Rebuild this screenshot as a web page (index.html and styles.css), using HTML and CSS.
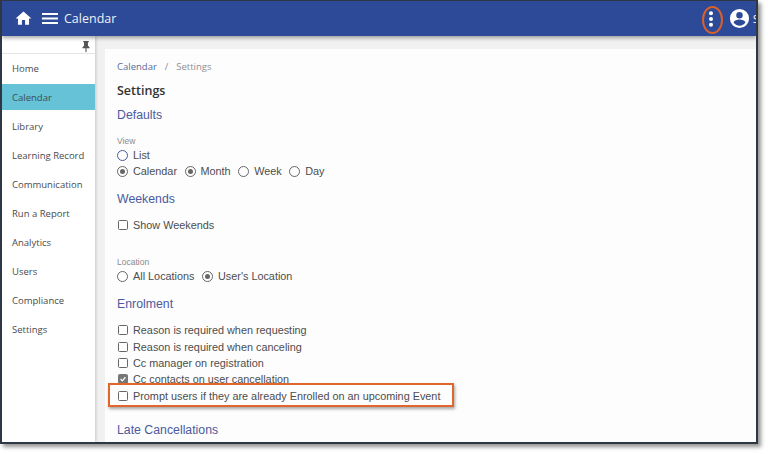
FILE: index.html
```html
<!DOCTYPE html>
<html lang="en">
<head>
<meta charset="utf-8">
<title>Calendar Settings</title>
<link rel="stylesheet" href="styles.css">
</head>
<body>
<div class="window">
  <header class="topbar">
    <svg class="ic-home" viewBox="0 0 24 24"><path d="M10 20v-6h4v6h5v-8h3L12 3 2 12h3v8z"/></svg>
    <svg class="ic-menu" viewBox="0 0 16 11"><path d="M0 0h16v2H0zM0 4.500h16v2H0zM0 9h16v2H0z"/></svg>
    <span class="app-title">Calendar</span>
    <span class="spacer"></span>
    <svg class="ic-dots" viewBox="0 0 6 16"><circle cx="3" cy="2.300" r="2"/><circle cx="3" cy="8" r="2"/><circle cx="3" cy="13.700" r="2"/></svg>
    <svg class="ic-user" viewBox="0 0 24 24"><path d="M12 2a10 10 0 1 0 0 20 10 10 0 0 0 0-20zm0 3.200a3.400 3.400 0 1 1 0 6.800 3.400 3.400 0 0 1 0-6.800zm0 14.400c-2.600 0-4.900-1.300-6.200-3.300 0-2 4.200-3.200 6.200-3.200s6.200 1.200 6.200 3.200c-1.300 2-3.600 3.300-6.200 3.300z"/></svg>
    <span class="user-name">S</span>
  </header>
  <div class="body">
    <nav class="sidebar">
      <div class="pin-row">
        <svg class="ic-pin" viewBox="0 0 10 14"><path d="M1.500 0h7v1.500H7.500v4.500L9.500 8v1.200H5.700V14H4.300V9.200H.5V8l2-2V1.500h-1z"/></svg>
      </div>
      <a class="nav-item">Home</a>
      <a class="nav-item active">Calendar</a>
      <a class="nav-item">Library</a>
      <a class="nav-item">Learning Record</a>
      <a class="nav-item">Communication</a>
      <a class="nav-item">Run a Report</a>
      <a class="nav-item">Analytics</a>
      <a class="nav-item">Users</a>
      <a class="nav-item">Compliance</a>
      <a class="nav-item">Settings</a>
    </nav>
    <main class="content">
      <section class="card">
        <div class="crumbs"><span class="crumb-link">Calendar</span><span class="crumb-sep">/</span><span>Settings</span></div>
        <h1 class="page-title">Settings</h1>
        <h2 class="section">Defaults</h2>
        <div class="caption cap-view">View</div>
        <div class="row"><span class="radio focus"></span><span>List</span></div>
        <div class="row">
          <span class="radio on"></span><span class="opt">Calendar</span>
          <span class="radio on"></span><span class="opt">Month</span>
          <span class="radio"></span><span class="opt">Week</span>
          <span class="radio"></span><span>Day</span>
        </div>
        <h2 class="section sec-weekends">Weekends</h2>
        <div class="row row-show"><span class="check"></span><span>Show Weekends</span></div>
        <div class="caption cap-location">Location</div>
        <div class="row">
          <span class="radio"></span><span class="opt">All Locations</span>
          <span class="radio on"></span><span>User's Location</span>
        </div>
        <h2 class="section sec-enrol">Enrolment</h2>
        <div class="row row-first"><span class="check"></span><span>Reason is required when requesting</span></div>
        <div class="row"><span class="check"></span><span>Reason is required when canceling</span></div>
        <div class="row"><span class="check"></span><span>Cc manager on registration</span></div>
        <div class="row"><span class="check on"><svg viewBox="0 0 10 10"><path d="M2 5l2.200 2.300L8 2.800" /></svg></span><span>Cc contacts on user cancellation</span></div>
        <div class="row"><span class="check"></span><span>Prompt users if they are already Enrolled on an upcoming Event</span></div>
        <h2 class="section sec-late">Late Cancellations</h2>
      </section>
    </main>
  </div>
  <div class="mark-ellipse"></div>
  <div class="mark-box"></div>
</div>
</body>
</html>
```
FILE: styles.css
```css
* { box-sizing: border-box; }
html, body { margin: 0; padding: 0; background: #fff; overflow: hidden; }
body { width: 768px; height: 454px; }

.window {
  position: relative;
  width: 758px;
  height: 444px;
  border: 1px solid #2f3744;
  border-width: 1px 2px 2px 2px;
  box-shadow: 3px 3px 4px rgba(60, 60, 60, .55);
  overflow: hidden;
  background: #f1f1f1;
  display: flex;
  flex-direction: column;
}

.topbar {
  flex: none;
  height: 35px;
  background: #2c4a97;
  color: #fff;
  display: flex;
  align-items: center;
  padding-left: 12px;
  box-shadow: 0 2px 4px rgba(0, 0, 0, .35);
  position: relative;
  z-index: 2;
}
.topbar svg { fill: #fff; display: block; flex: none; }
.ic-home { width: 19px; height: 19px; }
.ic-menu { width: 16px; height: 11px; margin-left: 9px; }
.app-title { margin-left: 6px; font: 12.500px "Open Sans", sans-serif; color: #eef1f8; }
.spacer { flex: 1; }
.ic-dots { width: 6px; height: 16px; margin-right: 14px; }
.ic-user { width: 23px; height: 23px; }
.user-name { margin-left: 2px; font: 10px "Open Sans", sans-serif; width: 3px; overflow: hidden; }

.body { flex: 1; display: flex; min-height: 0; }

.sidebar {
  flex: none;
  width: 93px;
  background: #fff;
  box-shadow: 1px 0 3px rgba(0, 0, 0, .18);
  font: 9.500px "Open Sans", sans-serif;
  color: #4a4a4a;
  position: relative;
  z-index: 1;
}
.pin-row {
  height: 18px;
  border-bottom: 1px solid #e4e4e4;
  display: flex;
  justify-content: flex-end;
  align-items: flex-end;
  padding: 0 5px 1px 0;
}
.ic-pin { width: 8px; height: 11px; fill: #555; display: block; }
.nav-item {
  display: flex;
  align-items: center;
  height: 29px;
  padding: 0 0 0 10px;
}
.nav-item.active { background: #66c2d6; color: #3a4f55; height: 26px; margin: 1px 0 2px; }

.content { flex: 1; min-width: 0; padding: 13px 0 0 10px; }
.card {
  height: 100%;
  background: #fdfdfd;
  padding: 11px 12px 0;
  font: 10.850px "Liberation Sans", Arial, sans-serif;
  color: #4d4d4d;
}
.crumbs { font: 9.500px "Open Sans", sans-serif; color: #8d8f94; height: 14px; line-height: 14px; }
.crumb-link { color: #5a6a9c; }
.crumb-sep { margin: 0 8px; }
.page-title { margin: 8px 0 0; font: 600 12.500px/18px "Open Sans", sans-serif; color: #333; }
.section { margin: 0; font: 400 12.300px/16px "Liberation Sans", Arial, sans-serif; color: #4c5a9e; }
.card > .page-title + .section { margin-top: 7px; }
.caption { font-size: 8.500px; line-height: 12px; color: #8a8a8a; }
.cap-view { margin-top: 12px; }
.cap-location { margin-top: 23px; }
.row { display: flex; align-items: center; height: 16.300px; line-height: 16px; }
.opt { margin-right: 7.500px; }
.sec-weekends { margin-top: 11px; }
.row-show { margin-top: 10px; }
.sec-enrol { margin-top: 12px; }
.row-first { margin-top: 10px; }
.sec-late { margin-top: 18px; }

.radio, .check {
  flex: none;
  display: block;
  width: 11px;
  height: 11px;
  margin-right: 5px;
  border: 1px solid #666;
  position: relative;
  background: #fff;
}
.radio { border-radius: 50%; }
.radio.focus { border-color: #46589e; }
.radio.on::after {
  content: "";
  position: absolute;
  left: 2px;
  top: 2px;
  width: 5px;
  height: 5px;
  border-radius: 50%;
  background: #666;
}
.check { border-radius: 1.500px; margin-left: 1px; width: 10px; height: 10px; }
.check.on { background: #777; border-color: #777; }
.check svg { display: block; width: 8px; height: 8px; fill: none; stroke: #fff; stroke-width: 1.500; }

.mark-ellipse {
  position: absolute;
  left: 700px;
  top: 5px;
  width: 21px;
  height: 28px;
  border: 2px solid #d9602a;
  border-radius: 50%;
  z-index: 3;
}
.mark-box {
  position: absolute;
  left: 106px;
  top: 382px;
  width: 346px;
  height: 24px;
  border: 2px solid #e0662c;
  box-shadow: 1px 2px 3px rgba(0, 0, 0, .35);
  z-index: 3;
}
```
